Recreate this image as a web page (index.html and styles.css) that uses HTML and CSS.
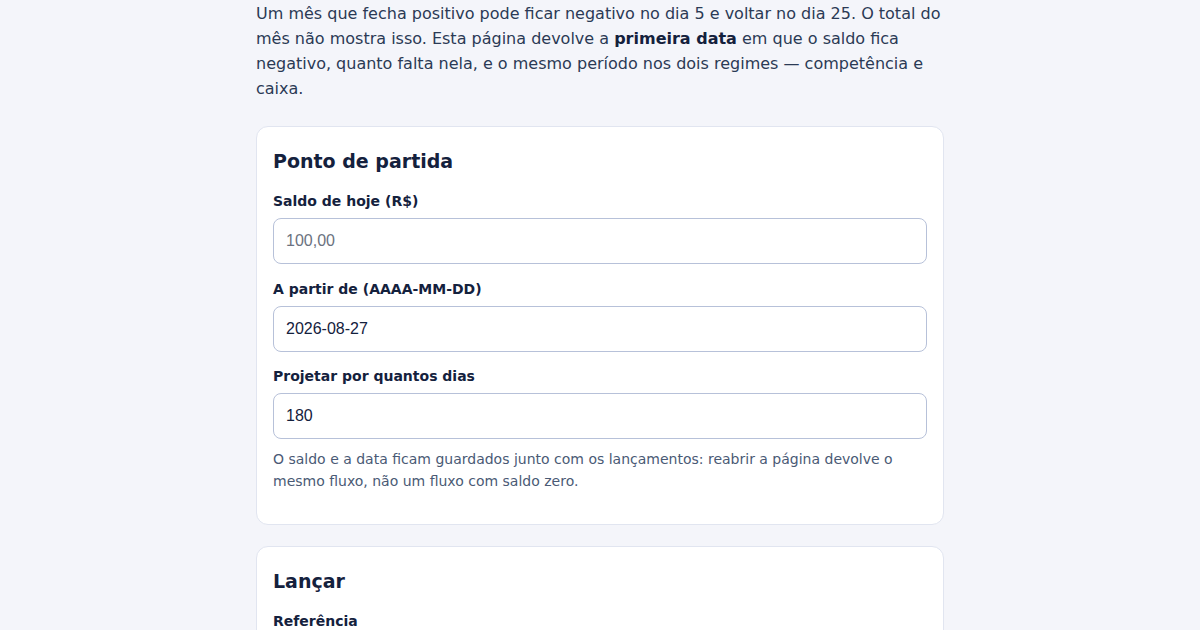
FILE: index.html
```html
<!DOCTYPE html>
<html lang="pt-BR">
<head>
<meta charset="utf-8">
<title>Primeira data negativa</title>
<link rel="stylesheet" href="styles.css">
</head>
<body>
<main class="page">
  <p class="intro">Um mês que fecha positivo pode ficar negativo no dia 5 e voltar no dia 25. O total do mês não mostra isso. Esta página devolve a <strong>primeira data</strong> em que o saldo fica negativo, quanto falta nela, e o mesmo período nos dois regimes — competência e caixa.</p>

  <section class="card">
    <h2 class="card-title">Ponto de partida</h2>
    <div class="field">
      <label class="label" for="saldo">Saldo de hoje (R$)</label>
      <input class="input" id="saldo" type="text" placeholder="100,00">
    </div>
    <div class="field">
      <label class="label" for="data">A partir de (AAAA-MM-DD)</label>
      <input class="input" id="data" type="text" value="2026-08-27">
    </div>
    <div class="field">
      <label class="label" for="dias">Projetar por quantos dias</label>
      <input class="input" id="dias" type="text" value="180">
    </div>
    <p class="hint">O saldo e a data ficam guardados junto com os lançamentos: reabrir a página devolve o mesmo fluxo, não um fluxo com saldo zero.</p>
  </section>

  <section class="card">
    <h2 class="card-title">Lançar</h2>
    <div class="field">
      <label class="label" for="ref">Referência</label>
      <input class="input" id="ref" type="text">
    </div>
  </section>
</main>
</body>
</html>
```

FILE: styles.css
```css
html, body {
  margin: 0;
  padding: 0;
  background: #f4f5fa;
}

body {
  font-family: "DejaVu Sans", sans-serif;
  color: #14213d;
}

.page {
  width: 688px;
  margin: 0 auto;
  display: flex;
  flex-direction: column;
  gap: 20px;
}

.intro {
  margin: 1px 0 5px;
  font-size: 16px;
  line-height: 25px;
  color: #2b3a55;
}

.intro strong {
  color: #14213d;
  font-weight: bold;
}

.card {
  background: #ffffff;
  border: 1px solid #e1e5f0;
  border-radius: 12px;
  padding: 22px 16px 32px;
}

.card + .card {
  margin-top: 1px;
}

.card-title {
  margin: 0 0 19px;
  font-size: 19px;
  line-height: 24px;
  font-weight: bold;
  color: #14213d;
}

.field {
  display: flex;
  flex-direction: column;
  margin-bottom: 15.5px;
}

.label {
  font-size: 14px;
  line-height: 18px;
  font-weight: bold;
  color: #14213d;
  margin-bottom: 8px;
}

.input {
  box-sizing: border-box;
  height: 46px;
  width: 100%;
  border: 1px solid #b7c1d9;
  border-radius: 8px;
  padding: 0 12px;
  font-family: "Liberation Sans", Arial, sans-serif;
  font-size: 16px;
  color: #14213d;
  background: #ffffff;
  outline: none;
}

.input::placeholder {
  color: #6b7280;
}

.hint {
  margin: -7px 0 0;
  font-size: 14px;
  line-height: 22px;
  color: #4a5a75;
}
```
